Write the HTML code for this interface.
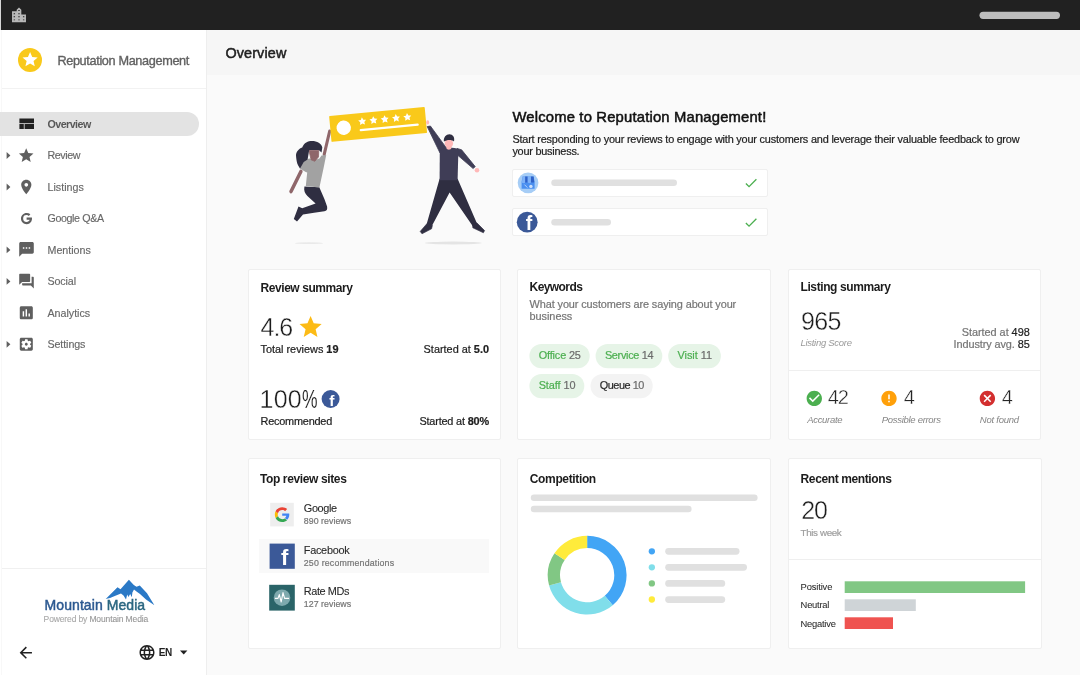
<!DOCTYPE html>
<html lang="en">
<head>
<meta charset="utf-8">
<title>Reputation Management - Overview</title>
<style>
html,body{margin:0;padding:0}
body{width:1080px;height:675px;overflow:hidden;position:relative;background:#fafafa;font-family:"Liberation Sans", Arial, sans-serif;-webkit-font-smoothing:antialiased;will-change:transform;transform:translateZ(0)}
.a{position:absolute;display:block;box-sizing:border-box}
.t{position:absolute;white-space:nowrap;margin:0;padding:0;line-height:1}
b{font-weight:700}
</style>
</head>
<body>
<div class="a" style="left:0px;top:0px;width:1080px;height:675px;background:#fafafa;"></div>
<div class="a" style="left:0px;top:0px;width:1px;height:675px;background:#fff;"></div>
<div class="a" style="left:0px;top:0px;width:1px;height:30px;background:#d6d6d6;"></div>
<div class="a" style="left:207px;top:30px;width:873px;height:45px;background:#f6f6f6;"></div>
<div class="a" style="left:1px;top:30px;width:206px;height:645px;background:#fff;border-left:1px solid #f8f8f8;border-right:1px solid #eeeeee;"></div>
<div class="a" style="left:1px;top:0px;width:1079px;height:30px;background:#212121;"></div>
<svg class="a" style="left:9px;top:5px" width="20" height="20" viewBox="-0.9 -1.16 25.81 25.81"><path fill="#b8b8b8" fill-rule="evenodd" d="M15 11V5l-3-3-3 3v2H3v14h18V11h-6zM5.1 9.45h1.8v1.2h-1.8zM5.1 13.45h1.8v1.2h-1.8zM5.1 17.45h1.8v1.2h-1.8zM11.1 5.45h1.8v1.2h-1.8zM11.1 9.45h1.8v1.2h-1.8zM11.1 13.45h1.8v1.2h-1.8zM11.1 17.45h1.8v1.2h-1.8zM17.1 13.45h1.8v1.2h-1.8zM17.1 17.45h1.8v1.2h-1.8z"/></svg>
<svg class="a" style="left:979px;top:11px" width="81" height="8"><rect x="0.5" y="0.7" width="80.5" height="7.2" rx="3.6" fill="#bdbdbd"/></svg>
<div class="a" style="left:18px;top:48px;width:24px;height:24px;background:#f9c91a;border-radius:50%;"></div>
<svg class="a" style="left:21px;top:50px;" width="19" height="19"><path fill="#fff" transform="translate(0 0.4) scale(0.7583)" d="M12 17.27L18.18 21l-1.64-7.03L22 9.24l-7.19-.61L12 2 9.19 8.63 2 9.24l5.46 4.73L5.82 21z"/></svg>
<div class="a" style="left:2px;top:88px;width:204px;height:1px;background:#f2f2f2;"></div>
<div class="a" style="left:0px;top:112px;width:199px;height:24px;background:#e3e3e3;border-radius:0 12px 12px 0;"></div>
<svg class="a" style="left:19px;top:118px" width="16" height="12" viewBox="0 0 16 12"><path fill="#212121" d="M0.4 0.6h14.6v4.6h-14.6zM0.4 6h4.4v5h-4.4zM5.6 6h9.4v5h-9.4z"/></svg>
<svg class="a" style="left:17px;top:146px;" width="18" height="19"><path fill="#5f5f5f" transform="translate(0.45 0.72) scale(0.7292)" d="M12 17.27L18.18 21l-1.64-7.03L22 9.24l-7.19-.61L12 2 9.19 8.63 2 9.24l5.46 4.73L5.82 21z"/></svg>
<svg class="a" style="left:6px;top:152px" width="5" height="7" viewBox="-0.6 -0.12 5 7"><path fill="#5f5f5f" d="M0 0L3.8 3.4L0 6.8z"/></svg>
<svg class="a" style="left:17px;top:178px;" width="19" height="18"><path fill="#5f5f5f" transform="translate(0.55 0.29) scale(0.7292)" d="M12 2C8.13 2 5 5.13 5 9c0 5.25 7 13 7 13s7-7.75 7-13c0-3.87-3.13-7-7-7zm0 9.5c-1.38 0-2.5-1.12-2.5-2.5s1.12-2.5 2.5-2.5 2.5 1.12 2.5 2.5-1.12 2.5-2.5 2.5z"/></svg>
<svg class="a" style="left:6px;top:183px" width="5" height="8" viewBox="-0.6 -0.59 5 8"><path fill="#5f5f5f" d="M0 0L3.8 3.4L0 6.8z"/></svg>
<svg class="a" style="left:19px;top:211px;" width="15" height="15"><path fill="#5f5f5f" transform="translate(0.55 0.76) scale(0.5625)" d="M12.545 10.239v3.821h5.445c-.712 2.315-2.647 3.972-5.445 3.972a6.033 6.033 0 1 1 0-12.064c1.498 0 2.866.549 3.921 1.453l2.814-2.814A9.969 9.969 0 0 0 12.545 2C7.021 2 2.543 6.477 2.543 12s4.478 10 10.002 10c8.396 0 10.249-7.85 9.426-11.748l-9.426-.013z"/></svg>
<svg class="a" style="left:17px;top:240px;" width="19" height="19"><path fill="#5f5f5f" transform="translate(0.75 0.65) scale(0.7292)" d="M20 2H4c-1.1 0-1.99.9-1.99 2L2 22l4-4h14c1.1 0 2-.9 2-2V4c0-1.1-.9-2-2-2zM9 11H7V9h2v2zm4 0h-2V9h2v2zm4 0h-2V9h2v2z"/></svg>
<svg class="a" style="left:6px;top:246px" width="5" height="8" viewBox="-0.6 -0.53 5 8"><path fill="#5f5f5f" d="M0 0L3.8 3.4L0 6.8z"/></svg>
<svg class="a" style="left:17px;top:272px;" width="19" height="18"><path fill="#5f5f5f" transform="translate(0.75 0.4) scale(0.7292)" d="M21 6h-2v9H6v2c0 .55.45 1 1 1h11l4 4V7c0-.55-.45-1-1-1zm-4 6V3c0-.55-.45-1-1-1H3c-.55 0-1 .45-1 1v14l4-4h10c.55 0 1-.45 1-1z"/></svg>
<svg class="a" style="left:6px;top:278px" width="5" height="7" viewBox="-0.6 0 5 7"><path fill="#5f5f5f" d="M0 0L3.8 3.4L0 6.8z"/></svg>
<svg class="a" style="left:17px;top:304px;" width="18" height="18"><path fill="#5f5f5f" transform="translate(0.6 0.12) scale(0.7250)" d="M19 3H5c-1.1 0-2 .9-2 2v14c0 1.1.9 2 2 2h14c1.1 0 2-.9 2-2V5c0-1.1-.9-2-2-2zM9 17H7v-7h2v7zm4 0h-2V7h2v10zm4 0h-2v-4h2v4z"/></svg>
<svg class="a" style="left:17px;top:335px;" width="18" height="18"><path fill="#5f5f5f" transform="translate(0.6 0.59) scale(0.7250)" d="M12 10c-1.1 0-2 .9-2 2s.9 2 2 2 2-.9 2-2-.9-2-2-2zm7-7H5c-1.11 0-2 .9-2 2v14c0 1.1.89 2 2 2h14c1.11 0 2-.9 2-2V5c0-1.1-.89-2-2-2zm-1.75 9c0 .23-.02.46-.05.68l1.48 1.16c.13.11.17.3.08.45l-1.4 2.42c-.09.15-.27.21-.43.15l-1.74-.7c-.36.28-.76.51-1.18.69l-.26 1.85c-.03.17-.18.3-.35.3h-2.8c-.17 0-.32-.13-.35-.29l-.26-1.85c-.43-.18-.82-.41-1.18-.69l-1.74.7c-.16.06-.34 0-.43-.15l-1.4-2.42c-.09-.15-.05-.34.08-.45l1.48-1.16c-.03-.23-.05-.46-.05-.69 0-.23.02-.46.05-.68l-1.48-1.16c-.13-.11-.17-.3-.08-.45l1.4-2.42c.09-.15.27-.21.43-.15l1.74.7c.36-.28.76-.51 1.18-.69l.26-1.85c.03-.17.18-.3.35-.3h2.8c.17 0 .32.13.35.29l.26 1.85c.43.18.82.41 1.18.69l1.74-.7c.16-.06.34 0 .43.15l1.4 2.42c.09.15.05.34-.08.45l-1.48 1.16c.03.23.05.46.05.69z"/></svg>
<svg class="a" style="left:6px;top:340px" width="5" height="8" viewBox="-0.6 -0.94 5 8"><path fill="#5f5f5f" d="M0 0L3.8 3.4L0 6.8z"/></svg>
<div class="a" style="left:2px;top:568px;width:204px;height:1px;background:#f0f0f0;"></div>
<svg class="a" style="left:100px;top:576px" width="60" height="34" viewBox="100 576 60 34"><path fill="#2b79c6" d="M105.7 599L117.5 587.2L120.5 589.3L128.9 579.8L133.8 585L136.5 586.8L139.8 585.4L147 593.3L154.4 605.2L146 599.4L140 594L136.5 591.6L134 589.6L132.4 592.4L131.8 597.2L130.2 594L128.4 597L127.2 594.4L126 599.6L123.5 595.4L121 593.6L116 595.6L110 598Z"/></svg>
<svg class="a" style="left:16px;top:643px;" width="19" height="19"><path fill="#212121" transform="translate(0.6 0.5) scale(0.7667)" d="M20 11H7.83l5.59-5.59L12 4l-8 8 8 8 1.41-1.41L7.83 13H20v-2z"/></svg>
<svg class="a" style="left:138px;top:643px;" width="18" height="19"><path fill="#212121" transform="translate(0 0.4) scale(0.7500)" d="M11.99 2C6.47 2 2 6.48 2 12s4.47 10 9.99 10C17.52 22 22 17.52 22 12S17.52 2 11.99 2zm6.93 6h-2.95c-.32-1.25-.78-2.45-1.38-3.56 1.84.63 3.37 1.91 4.33 3.56zM12 4.04c.83 1.2 1.48 2.53 1.91 3.96h-3.82c.43-1.43 1.08-2.76 1.91-3.96zM4.26 14C4.1 13.36 4 12.69 4 12s.1-1.36.26-2h3.38c-.08.66-.14 1.32-.14 2 0 .68.06 1.34.14 2H4.26zm.82 2h2.95c.32 1.25.78 2.45 1.38 3.56-1.84-.63-3.37-1.9-4.33-3.56zm2.95-8H5.08c.96-1.66 2.49-2.93 4.33-3.56C8.81 5.55 8.35 6.75 8.03 8zM12 19.96c-.83-1.2-1.48-2.53-1.91-3.96h3.82c-.43 1.43-1.08 2.76-1.91 3.96zM14.34 14H9.66c-.09-.66-.16-1.32-.16-2 0-.68.07-1.35.16-2h4.68c.09.65.16 1.32.16 2 0 .68-.07 1.34-.16 2zm.25 5.56c.6-1.11 1.06-2.31 1.38-3.56h2.95c-.96 1.65-2.49 2.93-4.33 3.56zM16.36 14c.08-.66.14-1.32.14-2 0-.68-.06-1.34-.14-2h3.38c.16.64.26 1.31.26 2s-.1 1.36-.26 2h-3.38z"/></svg>
<svg class="a" style="left:180px;top:650px" width="8" height="5" viewBox="0 -0.6 8 5"><path fill="#212121" d="M0 0h7.4L3.7 3.8z"/></svg>
<div class="a" style="left:512px;top:169px;width:256px;height:28px;background:#fff;border-radius:2px;border:1px solid #efefef;"></div>
<svg class="a" style="left:551px;top:179px" width="126" height="8"><rect x="0.3" y="0.5" width="125.7" height="6.6" rx="3.3" fill="#e0e0e0"/></svg>
<svg class="a" style="left:743px;top:175px;" width="16" height="16"><path fill="#4caf50" transform="translate(0.2 0.2) scale(0.6500)" d="M9 16.17L4.83 12l-1.42 1.41L9 19 21 7l-1.41-1.41z"/></svg>
<div class="a" style="left:512px;top:208px;width:256px;height:28px;background:#fff;border-radius:2px;border:1px solid #efefef;"></div>
<svg class="a" style="left:551px;top:219px" width="60" height="7"><rect x="0.3" y="0" width="59.7" height="6.6" rx="3.3" fill="#e0e0e0"/></svg>
<svg class="a" style="left:743px;top:214px;" width="16" height="17"><path fill="#4caf50" transform="translate(0.2 0.7) scale(0.6500)" d="M9 16.17L4.83 12l-1.42 1.41L9 19 21 7l-1.41-1.41z"/></svg>
<svg class="a" style="left:516px;top:171px" width="24" height="24" viewBox="516 171 24 24"><circle cx="528.05" cy="182.85" r="10.35" fill="#a6cdf6"/><path fill="#4a8ff0" d="M522.6 176.6h11l1 5.2v7h-13v-7z"/><path fill="#2f62c8" d="M525.1 176.6h2.6v6h-2.6zM530.9 176.6h2.7l.6 5.4c0 .8-3.3.8-3.3 0z"/><path fill="#7fb2f7" d="M522.6 176.6h2.5v6c0 .8-3.2.8-3.2 0zM527.7 176.6h3.2v6c0 .8-3.2.8-3.2 0z"/><circle cx="530.9" cy="186.4" r="1.7" fill="#cfe2fb"/><path d="M524.4 184.6l3 3" stroke="#b5d2fa" stroke-width="1" fill="none"/></svg>
<svg class="a" style="left:516px;top:211px" width="22" height="22"><ellipse cx="11.2" cy="11.2" rx="10.4" ry="10.4" fill="#3b5998"/></svg>
<div class="a" style="left:248px;top:269px;width:253px;height:171px;background:#fff;border-radius:2px;border:1px solid #efefef;"></div>
<div class="a" style="left:517px;top:269px;width:254px;height:171px;background:#fff;border-radius:2px;border:1px solid #efefef;"></div>
<div class="a" style="left:788px;top:269px;width:253px;height:171px;background:#fff;border-radius:2px;border:1px solid #efefef;"></div>
<div class="a" style="left:248px;top:458px;width:253px;height:191px;background:#fff;border-radius:2px;border:1px solid #efefef;"></div>
<div class="a" style="left:517px;top:458px;width:254px;height:191px;background:#fff;border-radius:2px;border:1px solid #efefef;"></div>
<div class="a" style="left:788px;top:458px;width:254px;height:191px;background:#fff;border-radius:2px;border:1px solid #efefef;"></div>
<svg class="a" style="left:297px;top:313px;" width="27" height="28"><path fill="#fcbb16" transform="translate(0.3 0.7) scale(1.1083)" d="M12 17.27L18.18 21l-1.64-7.03L22 9.24l-7.19-.61L12 2 9.19 8.63 2 9.24l5.46 4.73L5.82 21z"/></svg>
<svg class="a" style="left:321px;top:390px" width="19" height="18"><ellipse cx="9.6" cy="9" rx="9" ry="9" fill="#3b5998"/></svg>
<svg class="a" style="left:529px;top:344px" width="61" height="25"><rect x="0.4" y="0" width="60.3" height="24.2" rx="12.1" fill="#e6f4e7"/></svg>
<svg class="a" style="left:595px;top:344px" width="68" height="25"><rect x="0.6" y="0" width="66.7" height="24.2" rx="12.1" fill="#e6f4e7"/></svg>
<svg class="a" style="left:668px;top:344px" width="53" height="25"><rect x="0.2" y="0" width="52.7" height="24.2" rx="12.1" fill="#e6f4e7"/></svg>
<svg class="a" style="left:529px;top:374px" width="56" height="25"><rect x="0.4" y="0" width="54.9" height="24.2" rx="12.1" fill="#e6f4e7"/></svg>
<svg class="a" style="left:590px;top:374px" width="63" height="25"><rect x="0.5" y="0" width="62.2" height="24.2" rx="12.1" fill="#f3f3f3"/></svg>
<div class="a" style="left:789px;top:370px;width:251px;height:1px;background:#efefef;"></div>
<svg class="a" style="left:809px;top:393px" width="11" height="11"><ellipse cx="5.3" cy="5.4" rx="5" ry="5" fill="#fff"/></svg>
<svg class="a" style="left:805px;top:389px;" width="19" height="19"><path fill="#4caf50" transform="translate(0.1 0.2) scale(0.7667)" d="M12 2C6.48 2 2 6.48 2 12s4.48 10 10 10 10-4.48 10-10S17.52 2 12 2zm-2 15l-5-5 1.41-1.41L10 14.17l7.59-7.59L19 8l-9 9z"/></svg>
<svg class="a" style="left:884px;top:393px" width="10" height="11"><ellipse cx="5" cy="5.4" rx="5" ry="5" fill="#fff"/></svg>
<svg class="a" style="left:879px;top:389px;" width="20" height="19"><path fill="#ffa00a" transform="translate(0.8 0.2) scale(0.7667)" d="M12 2C6.48 2 2 6.48 2 12s4.48 10 10 10 10-4.48 10-10S17.52 2 12 2zm1 15h-2v-2h2v2zm0-4h-2V7h2v6z"/></svg>
<svg class="a" style="left:982px;top:393px" width="11" height="11"><ellipse cx="5.4" cy="5.4" rx="5" ry="5" fill="#fff"/></svg>
<svg class="a" style="left:978px;top:389px;" width="19" height="19"><path fill="#d32f2f" transform="translate(0.2 0.2) scale(0.7667)" d="M12 2C6.47 2 2 6.47 2 12s4.47 10 10 10 10-4.47 10-10S17.53 2 12 2zm5 13.59L15.59 17 12 13.41 8.41 17 7 15.59 10.59 12 7 8.41 8.41 7 12 10.59 15.59 7 17 8.41 13.41 12 17 15.59z"/></svg>
<div class="a" style="left:259px;top:539px;width:230px;height:34px;background:#f9f9f9;"></div>
<svg class="a" style="left:270px;top:502px" width="24" height="25"><rect x="0.2" y="0.8" width="23.6" height="23.6" fill="#eeeeee"/></svg>
<svg class="a" style="left:274px;top:507px" width="16" height="15" viewBox="-1.3 -0.32 25.95 24.32"><path fill="#4285F4" d="M23.5 12.27c0-.85-.07-1.47-.22-2.11H12v3.83h6.62c-.13 1.1-.85 2.6-2.45 3.6l3.78 2.93c2.26-2.09 3.55-5.16 3.55-8.25z"/><path fill="#34A853" d="M12 24c3.24 0 5.96-1.07 7.95-2.9l-3.78-2.93c-1.01.7-2.37 1.2-4.17 1.2-3.17 0-5.87-2.1-6.83-4.99l-3.9 3.02C3.24 21.31 7.31 24 12 24z"/><path fill="#FBBC05" d="M5.17 14.38A7.4 7.4 0 0 1 4.77 12c0-.83.15-1.63.39-2.38L1.26 6.6A12 12 0 0 0 0 12c0 1.94.47 3.76 1.27 5.4l3.9-3.02z"/><path fill="#EA4335" d="M12 4.64c2.25 0 3.77.97 4.64 1.79l3.39-3.31C17.95 1.19 15.24 0 12 0 7.31 0 3.24 2.69 1.26 6.6l3.9 3.02C6.13 6.74 8.83 4.64 12 4.64z"/></svg>
<svg class="a" style="left:269px;top:543px" width="26" height="26"><rect x="0.6" y="0.6" width="25.2" height="25.2" fill="#3b5998"/></svg>
<svg class="a" style="left:269px;top:584px" width="26" height="27"><rect x="0.2" y="0.8" width="25.6" height="25.8" fill="#2a6468"/></svg>
<svg class="a" style="left:269px;top:584px" width="26" height="27" viewBox="-0.2 -0.8 26 27"><circle cx="12.8" cy="12.9" r="8.3" fill="#7ea9ad"/><path d="M6.2 13.6h2.6l1.3-3.8 1.9 7.4 1.8-9.4 1.6 5.8h4" fill="none" stroke="#fff" stroke-width="1.1" stroke-linejoin="round" stroke-linecap="round"/></svg>
<svg class="a" style="left:530px;top:494px" width="228" height="7"><rect x="0.8" y="0.6" width="226.8" height="6.4" rx="3.2" fill="#e0e0e0"/></svg>
<svg class="a" style="left:530px;top:505px" width="162" height="8"><rect x="0.8" y="0.8" width="160.8" height="6.4" rx="3.2" fill="#e0e0e0"/></svg>
<svg class="a" style="left:546px;top:534px" width="83" height="83" viewBox="546 534 83 83"><path fill="#42a5f5" d="M587.15 535.80A39.4 39.4 0 0 1 612.74 605.16L604.75 595.81A27.1 27.1 0 0 0 587.15 548.10Z"/><path fill="#80deea" d="M612.74 605.16A39.4 39.4 0 0 1 549.09 585.40L560.97 582.21A27.1 27.1 0 0 0 604.75 595.81Z"/><path fill="#81c784" d="M549.09 585.40A39.4 39.4 0 0 1 554.49 553.17L564.68 560.05A27.1 27.1 0 0 0 560.97 582.21Z"/><path fill="#ffeb3b" d="M554.49 553.17A39.4 39.4 0 0 1 587.15 535.80L587.15 548.10A27.1 27.1 0 0 0 564.68 560.05Z"/></svg>
<svg class="a" style="left:648px;top:548px" width="7" height="7"><ellipse cx="3.85" cy="3.3" rx="3.15" ry="3.15" fill="#42a5f5"/></svg>
<svg class="a" style="left:665px;top:548px" width="75" height="7"><rect x="0.2" y="0" width="74.3" height="6.7" rx="3.35" fill="#e0e0e0"/></svg>
<svg class="a" style="left:648px;top:564px" width="7" height="7"><ellipse cx="3.85" cy="3.3" rx="3.15" ry="3.15" fill="#80deea"/></svg>
<svg class="a" style="left:665px;top:564px" width="82" height="7"><rect x="0.2" y="0" width="81.8" height="6.7" rx="3.35" fill="#e0e0e0"/></svg>
<svg class="a" style="left:648px;top:580px" width="7" height="7"><ellipse cx="3.85" cy="3.4" rx="3.15" ry="3.15" fill="#81c784"/></svg>
<svg class="a" style="left:665px;top:580px" width="61" height="7"><rect x="0.2" y="0.1" width="60" height="6.7" rx="3.35" fill="#e0e0e0"/></svg>
<svg class="a" style="left:648px;top:596px" width="7" height="7"><ellipse cx="3.85" cy="3.5" rx="3.15" ry="3.15" fill="#ffeb3b"/></svg>
<svg class="a" style="left:665px;top:596px" width="61" height="7"><rect x="0.2" y="0.2" width="60" height="6.7" rx="3.35" fill="#e0e0e0"/></svg>
<div class="a" style="left:789px;top:559px;width:252px;height:1px;background:#efefef;"></div>
<svg class="a" style="left:844px;top:581px" width="182" height="12"><rect x="0.7" y="0.3" width="180.4" height="11.7" fill="#81c784"/></svg>
<svg class="a" style="left:844px;top:599px" width="72" height="12"><rect x="0.7" y="0.3" width="71.1" height="11.7" fill="#cfd4d7"/></svg>
<svg class="a" style="left:844px;top:617px" width="49" height="12"><rect x="0.7" y="0.3" width="48.3" height="11.7" fill="#ef5350"/></svg>
<svg class="a" style="left:270px;top:95px" width="250" height="155" viewBox="270 95 250 155"><ellipse cx="309" cy="243.2" rx="14" ry="0.9" fill="#e9e9e9"/>
<ellipse cx="453.3" cy="243" rx="28.5" ry="1.4" fill="#e4e4e4"/>
<path d="M324.2 154.4L329.7 131" fill="none" stroke="#8f666a" stroke-width="3.1" stroke-linecap="round"/>
<path d="M300.9 171.4L291 191.6" fill="none" stroke="#8f666a" stroke-width="3.5" stroke-linecap="round"/>
<path d="M304.4 186.5L319.3 187.2L324.4 199.1L327.1 206.5C327.6 209.6 326.6 211 324.4 211.2L314.1 212.7L303 214.6L297 221.6L293.8 219.1L298.5 206.5L302.2 208.3L315.6 203.5L307.4 196.1C305 193.6 303.6 190.6 304.4 186.5Z" fill="#2f2e41"/>
<path d="M302 161.6L309.2 158.6L314.8 160L319.4 158.6L321.5 155.6L326.2 155L323.9 166.5L319.4 187.4L305.8 185.9L307.2 172.6L305.7 171.9L299.1 168Z" fill="#a2a2a2"/>
<path d="M308.9 150.2L318.8 150.2L318.5 156.9L314.8 161.3L311.1 159.8Z" fill="#8f666a" stroke="#8f666a" stroke-width="0.8" stroke-linejoin="round"/>
<path d="M302.2 147.6C304 142.6 308 141 312 141C317 141 321.6 143.6 322.3 147.4L321.5 152.6L318.8 150L309.2 150L307.6 159.6L303.7 162L300.2 168.2C297.6 166 296.4 162 296 155.6C296 152 298.6 149 302.2 147.6Z" fill="#2f2e41"/>
<g transform="rotate(-5.39 378.05 124.5)">
<rect x="330.1" y="111.5" width="96" height="26" rx="0.8" fill="#f9c91a"/>
<circle cx="343.6" cy="124.5" r="7.2" fill="#fff"/>
<g fill="#fff"><polygon points="362.60,115.80 363.83,118.30 366.59,118.70 364.60,120.65 365.07,123.40 362.60,122.10 360.13,123.40 360.60,120.65 358.61,118.70 361.37,118.30"/><polygon points="373.93,115.80 375.16,118.30 377.92,118.70 375.93,120.65 376.40,123.40 373.93,122.10 371.46,123.40 371.93,120.65 369.94,118.70 372.70,118.30"/><polygon points="385.26,115.80 386.49,118.30 389.25,118.70 387.26,120.65 387.73,123.40 385.26,122.10 382.79,123.40 383.26,120.65 381.27,118.70 384.03,118.30"/><polygon points="396.59,115.80 397.82,118.30 400.58,118.70 398.59,120.65 399.06,123.40 396.59,122.10 394.12,123.40 394.59,120.65 392.60,118.70 395.36,118.30"/><polygon points="407.92,115.80 409.15,118.30 411.91,118.70 409.92,120.65 410.39,123.40 407.92,122.10 405.45,123.40 405.92,120.65 403.93,118.70 406.69,118.30"/></g>
<rect x="359.2" y="127.25" width="59.4" height="2.3" rx="1.15" fill="#fff"/>
</g>
<path d="M439.6 178.8L457.6 178.8L477 223.4L473 226.4L449.6 192.4L432 225.8L426.6 224.2Z" fill="#2f2e41"/>
<path d="M427 223.6L432.4 225.4L431.6 228.8L422 233.8L420.2 231.4Z" fill="#2f2e41" stroke="#2f2e41" stroke-width="0.6" stroke-linejoin="round"/>
<path d="M472.6 224.8L476.8 222.8L484.6 230.6L483.4 232.8L472.8 227.8Z" fill="#2f2e41" stroke="#2f2e41" stroke-width="0.6" stroke-linejoin="round"/>
<path d="M440 153L427.2 126.6L430.4 126L446.6 148.2Z" fill="#3f3d56" stroke="#3f3d56" stroke-width="0.8" stroke-linejoin="round"/>
<path d="M457 148.4L461.6 149.8L475.2 166.6L473.2 168.6L457.4 155Z" fill="#3f3d56" stroke="#3f3d56" stroke-width="0.8" stroke-linejoin="round"/>
<path d="M439.8 151.6C442 148.4 445 147.8 448.6 147.8C453 147.8 456.6 148 458.4 149.4L457.6 180.2L439.6 180.2Z" fill="#3f3d56"/>
<ellipse cx="427.7" cy="122.4" rx="1.5" ry="2.1" fill="#ffb8b8"/>
<circle cx="477" cy="170.2" r="2.3" fill="#ffb8b8"/>
<path d="M446.6 146L451.2 146L451.2 149L448.9 149.8L446.6 149Z" fill="#ffb8b8"/>
<circle cx="448.9" cy="143.5" r="4.2" fill="#ffb8b8"/>
<path d="M443.9 141.6C443.2 137.4 446.2 134.3 449.4 134.3C452.8 134.3 455 137.4 454 141.4C452 139.6 447.2 139.2 443.9 141.6Z" fill="#2f2e41"/></svg>
<div class="t" style="left:57.4px;top:55px;font-size:12.7px;color:#616161;letter-spacing:-0.35px;-webkit-text-stroke:0.35px #616161;">Reputation Management</div>
<div class="t" style="left:47.5px;top:118.6px;font-size:10.7px;color:#585858;font-weight:700;letter-spacing:-0.54px;">Overview</div>
<div class="t" style="left:47.5px;top:150.17px;font-size:10.7px;color:#686868;letter-spacing:-0.41px;-webkit-text-stroke:0.15px;">Review</div>
<div class="t" style="left:47.5px;top:181.64px;font-size:10.7px;color:#686868;letter-spacing:0.02px;-webkit-text-stroke:0.15px;">Listings</div>
<div class="t" style="left:47.5px;top:213.11px;font-size:10.7px;color:#686868;letter-spacing:-0.38px;-webkit-text-stroke:0.15px;">Google Q&amp;A</div>
<div class="t" style="left:47.5px;top:244.58px;font-size:10.7px;color:#686868;letter-spacing:-0.02px;-webkit-text-stroke:0.15px;">Mentions</div>
<div class="t" style="left:47.5px;top:276.05px;font-size:10.7px;color:#686868;letter-spacing:-0.12px;-webkit-text-stroke:0.15px;">Social</div>
<div class="t" style="left:47.5px;top:307.52px;font-size:10.7px;color:#686868;letter-spacing:-0.02px;-webkit-text-stroke:0.15px;">Analytics</div>
<div class="t" style="left:47.5px;top:338.99px;font-size:10.7px;color:#686868;letter-spacing:-0.1px;-webkit-text-stroke:0.15px;">Settings</div>
<div class="t" style="left:44.6px;top:598.1px;font-size:14px;color:#2b5890;letter-spacing:0.07px;-webkit-text-stroke:0.45px;">Mountain <span style="color:#2a6680">Media</span></div>
<div class="t" style="left:43.6px;top:614.8px;font-size:8.5px;color:#a8a8a8;letter-spacing:-0.13px;-webkit-text-stroke:0.1px;">Powered by <span style="color:#969696">Mountain Media</span></div>
<div class="t" style="left:158.8px;top:647.8px;font-size:10px;color:#212121;font-weight:700;letter-spacing:-0.5px;">EN</div>
<div class="t" style="left:225.4px;top:45.6px;font-size:14.4px;color:#212121;letter-spacing:0.13px;-webkit-text-stroke:0.5px #212121;">Overview</div>
<div class="t" style="left:512.4px;top:110.4px;font-size:14.8px;color:#111;letter-spacing:0.18px;-webkit-text-stroke:0.5px #111;">Welcome to Reputation Management!</div>
<div class="t" style="left:512.4px;top:134.2px;font-size:10.9px;color:#212121;letter-spacing:-0.19px;-webkit-text-stroke:0.2px;">Start responding to your reviews to engage with your customers and leverage their valuable feedback to grow</div>
<div class="t" style="left:512.4px;top:146.2px;font-size:10.9px;color:#212121;letter-spacing:-0.23px;-webkit-text-stroke:0.2px;">your business.</div>
<div class="t" style="left:525.8px;top:214.3px;font-size:19.5px;color:#fff;font-weight:700;">f</div>
<div class="t" style="left:260.5px;top:281.6px;font-size:12px;color:#1c1c1c;font-weight:700;letter-spacing:-0.43px;">Review summary</div>
<div class="t" style="left:260.6px;top:314.6px;font-size:25px;color:#1c1c1c;letter-spacing:-1.09px;-webkit-text-stroke:0.4px #fff;">4.6</div>
<div class="t" style="left:260.5px;top:344px;font-size:10.9px;color:#212121;letter-spacing:-0.01px;-webkit-text-stroke:0.2px;">Total reviews <b>19</b></div>
<div class="t" style="left:423.6px;top:344px;font-size:10.9px;color:#212121;-webkit-text-stroke:0.2px;">Started at <b>5.0</b></div>
<div class="t" style="left:259.6px;top:386.9px;font-size:25px;color:#1c1c1c;letter-spacing:0.2px;-webkit-text-stroke:0.4px #fff;">100<span style="display:inline-block;transform:scaleX(.7);transform-origin:0 50%;-webkit-text-stroke:0.15px #fff">%</span></div>
<div class="t" style="left:329.2px;top:392.6px;font-size:15.5px;color:#fff;font-weight:700;">f</div>
<div class="t" style="left:260.5px;top:416.1px;font-size:10.9px;color:#212121;letter-spacing:-0.21px;-webkit-text-stroke:0.2px;">Recommended</div>
<div class="t" style="left:419.4px;top:416.1px;font-size:10.9px;color:#212121;letter-spacing:-0.18px;-webkit-text-stroke:0.2px;">Started at <b>80%</b></div>
<div class="t" style="left:529.6px;top:281.2px;font-size:12px;color:#1c1c1c;font-weight:700;letter-spacing:-0.59px;">Keywords</div>
<div class="t" style="left:529.6px;top:299.3px;font-size:10.9px;color:#757575;letter-spacing:-0.1px;-webkit-text-stroke:0.2px;">What your customers are saying about your</div>
<div class="t" style="left:529.6px;top:311.3px;font-size:10.9px;color:#757575;letter-spacing:-0.05px;-webkit-text-stroke:0.2px;">business</div>
<div class="t" style="left:538.7px;top:350.1px;font-size:10.9px;color:#4caf50;letter-spacing:-0.15px;-webkit-text-stroke:0.2px;">Office <span style="color:#6b6b6b">25</span></div>
<div class="t" style="left:604.9px;top:350.1px;font-size:10.9px;color:#4caf50;letter-spacing:-0.3px;-webkit-text-stroke:0.2px;">Service <span style="color:#6b6b6b">14</span></div>
<div class="t" style="left:677.5px;top:350.1px;font-size:10.9px;color:#4caf50;letter-spacing:-0.03px;-webkit-text-stroke:0.2px;">Visit <span style="color:#6b6b6b">11</span></div>
<div class="t" style="left:538.7px;top:380.1px;font-size:10.9px;color:#4caf50;letter-spacing:-0.08px;-webkit-text-stroke:0.2px;">Staff <span style="color:#6b6b6b">10</span></div>
<div class="t" style="left:599.8px;top:380.1px;font-size:10.9px;color:#2a2a2a;letter-spacing:-0.48px;-webkit-text-stroke:0.2px;">Queue <span style="color:#6b6b6b">10</span></div>
<div class="t" style="left:800.5px;top:281.2px;font-size:12px;color:#1c1c1c;font-weight:700;letter-spacing:-0.4px;">Listing summary</div>
<div class="t" style="left:801px;top:308.9px;font-size:25px;color:#1c1c1c;letter-spacing:-0.71px;-webkit-text-stroke:0.4px #fff;">965</div>
<div class="t" style="left:800.5px;top:338.2px;font-size:9.5px;color:#9a9a9a;font-style:italic;letter-spacing:-0.29px;-webkit-text-stroke:0;">Listing Score</div>
<div class="t" style="left:961.8px;top:326.8px;font-size:10.9px;color:#757575;letter-spacing:-0.04px;-webkit-text-stroke:0.2px;">Started at <span style="color:#212121">498</span></div>
<div class="t" style="left:953.6px;top:338.8px;font-size:10.9px;color:#757575;letter-spacing:-0.09px;-webkit-text-stroke:0.2px;">Industry avg. <span style="color:#212121">85</span></div>
<div class="t" style="left:827.8px;top:387.3px;font-size:20px;color:#262626;letter-spacing:-1.12px;-webkit-text-stroke:0.4px #fff;">42</div>
<div class="t" style="left:807.2px;top:414.8px;font-size:9.5px;color:#868686;font-style:italic;letter-spacing:-0.31px;-webkit-text-stroke:0;">Accurate</div>
<div class="t" style="left:903.8px;top:387.3px;font-size:20px;color:#262626;letter-spacing:-1.53px;-webkit-text-stroke:0.4px #fff;">4</div>
<div class="t" style="left:881.8px;top:414.8px;font-size:9.5px;color:#868686;font-style:italic;letter-spacing:-0.3px;-webkit-text-stroke:0;">Possible errors</div>
<div class="t" style="left:1001.8px;top:387.3px;font-size:20px;color:#262626;letter-spacing:-1.53px;-webkit-text-stroke:0.4px #fff;">4</div>
<div class="t" style="left:979.8px;top:414.8px;font-size:9.5px;color:#868686;font-style:italic;letter-spacing:-0.24px;-webkit-text-stroke:0;">Not found</div>
<div class="t" style="left:259.9px;top:473.2px;font-size:12px;color:#1c1c1c;font-weight:700;letter-spacing:-0.37px;">Top review sites</div>
<div class="t" style="left:303.8px;top:503.2px;font-size:10.9px;color:#2a2a2a;letter-spacing:-0.35px;-webkit-text-stroke:0.1px;">Google</div>
<div class="t" style="left:303.8px;top:516.6px;font-size:8.8px;color:#757575;letter-spacing:0.04px;-webkit-text-stroke:0.2px;">890 reviews</div>
<div class="t" style="left:280.9px;top:547.2px;font-size:22px;color:#fff;font-weight:700;">f</div>
<div class="t" style="left:303.8px;top:544.8px;font-size:10.9px;color:#2a2a2a;letter-spacing:-0.28px;-webkit-text-stroke:0.1px;">Facebook</div>
<div class="t" style="left:303.8px;top:559.1px;font-size:8.8px;color:#757575;letter-spacing:0.18px;-webkit-text-stroke:0.2px;">250 recommendations</div>
<div class="t" style="left:303.8px;top:586.2px;font-size:10.9px;color:#2a2a2a;letter-spacing:-0.4px;-webkit-text-stroke:0.1px;">Rate MDs</div>
<div class="t" style="left:303.8px;top:599.8px;font-size:8.8px;color:#757575;letter-spacing:0.04px;-webkit-text-stroke:0.2px;">127 reviews</div>
<div class="t" style="left:529.8px;top:473.2px;font-size:12px;color:#1c1c1c;font-weight:700;letter-spacing:-0.36px;">Competition</div>
<div class="t" style="left:800.6px;top:473.2px;font-size:12px;color:#1c1c1c;font-weight:700;letter-spacing:-0.39px;">Recent mentions</div>
<div class="t" style="left:801.2px;top:498.4px;font-size:25px;color:#1c1c1c;letter-spacing:-1.11px;-webkit-text-stroke:0.4px #fff;">20</div>
<div class="t" style="left:800.6px;top:528.1px;font-size:9.8px;color:#9e9e9e;letter-spacing:-0.37px;-webkit-text-stroke:0.2px;">This week</div>
<div class="t" style="left:800.6px;top:581.6px;font-size:9.4px;color:#2a2a2a;letter-spacing:-0.15px;-webkit-text-stroke:0.05px;">Positive</div>
<div class="t" style="left:800.6px;top:600.2px;font-size:9.4px;color:#2a2a2a;letter-spacing:-0.23px;-webkit-text-stroke:0.05px;">Neutral</div>
<div class="t" style="left:800.6px;top:618.9px;font-size:9.4px;color:#2a2a2a;letter-spacing:-0.25px;-webkit-text-stroke:0.05px;">Negative</div>
</body>
</html>
